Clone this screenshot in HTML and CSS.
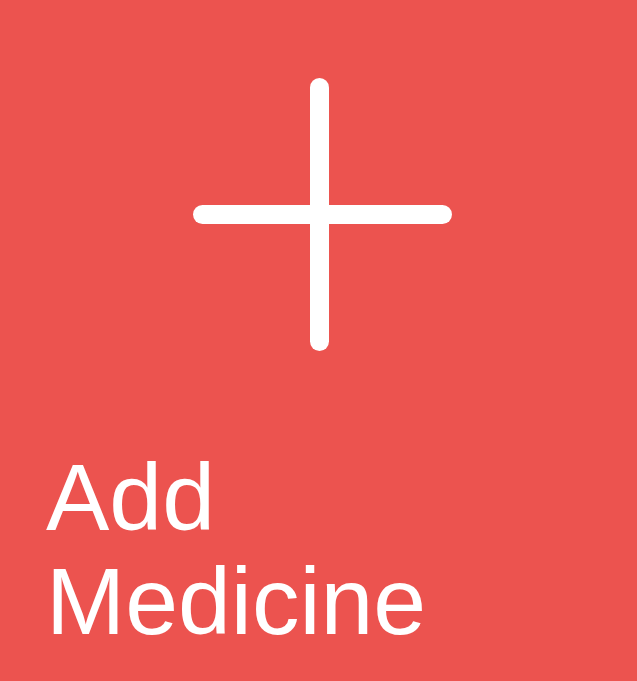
FILE: index.html
```html
<!DOCTYPE html>
<html>
<head>
<meta charset="utf-8">
<link rel="stylesheet" href="styles.css">
</head>
<body>
<div class="tile">
  <div class="icon-wrap">
    <svg class="plus" width="259" height="273" viewBox="0 0 259 273">
      <line x1="126.5" y1="9.5" x2="126.5" y2="263.5" />
      <line x1="9.5" y1="136.5" x2="249.5" y2="136.5" />
    </svg>
  </div>
  <div class="label">Add<br>Medicine</div>
</div>
</body>
</html>
```
FILE: styles.css
```css
html, body {
  margin: 0;
  padding: 0;
}
body {
  width: 637px;
  height: 681px;
  overflow: hidden;
}
.tile {
  width: 637px;
  height: 681px;
  background: #ec534f;
  display: flex;
  flex-direction: column;
  box-sizing: border-box;
}
.icon-wrap {
  padding: 78px 0 0 193px;
  display: flex;
}
.plus {
  display: block;
}
.plus line {
  stroke: #ffffff;
  stroke-width: 19;
  stroke-linecap: round;
}
.label {
  margin-top: 94px;
  padding-left: 46px;
  color: #ffffff;
  font-family: "Liberation Sans", Arial, sans-serif;
  font-size: 95px;
  line-height: 104px;
}
```
